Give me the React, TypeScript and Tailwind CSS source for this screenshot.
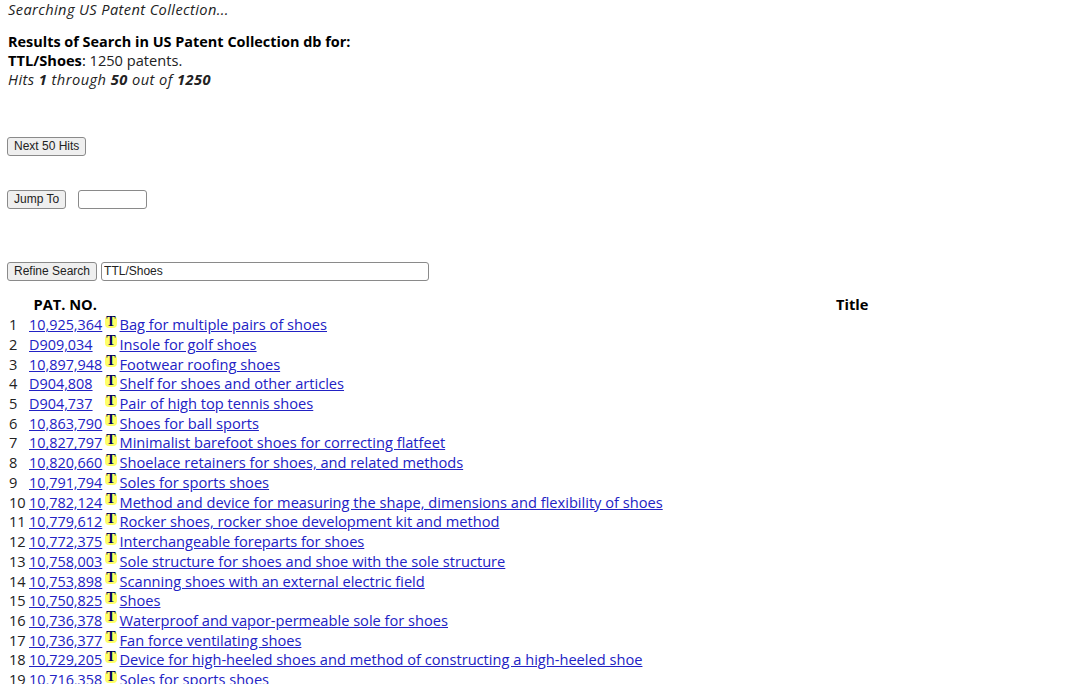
const rows: [string, string][] = [
  ['10,925,364', 'Bag for multiple pairs of shoes'],
  ['D909,034', 'Insole for golf shoes'],
  ['10,897,948', 'Footwear roofing shoes'],
  ['D904,808', 'Shelf for shoes and other articles'],
  ['D904,737', 'Pair of high top tennis shoes'],
  ['10,863,790', 'Shoes for ball sports'],
  ['10,827,797', 'Minimalist barefoot shoes for correcting flatfeet'],
  ['10,820,660', 'Shoelace retainers for shoes, and related methods'],
  ['10,791,794', 'Soles for sports shoes'],
  ['10,782,124', 'Method and device for measuring the shape, dimensions and flexibility of shoes'],
  ['10,779,612', 'Rocker shoes, rocker shoe development kit and method'],
  ['10,772,375', 'Interchangeable foreparts for shoes'],
  ['10,758,003', 'Sole structure for shoes and shoe with the sole structure'],
  ['10,753,898', 'Scanning shoes with an external electric field'],
  ['10,750,825', 'Shoes'],
  ['10,736,378', 'Waterproof and vapor-permeable sole for shoes'],
  ['10,736,377', 'Fan force ventilating shoes'],
  ['10,729,205', 'Device for high-heeled shoes and method of constructing a high-heeled shoe'],
  ['10,716,358', 'Soles for sports shoes'],
];

const buttonClass =
  "h-[19px] rounded-[3px] border border-[#8a8a8a] bg-[#efefef] px-[6px] font-['Liberation_Sans',sans-serif] text-[12px] leading-none text-[#222]";

function Row({ n, pat, title }: { n: number; pat: string; title: string }) {
  return (
    <div className="flex h-[19.72px] items-center">
      <span className="w-[21px] pl-[1px] text-[#222]">{n}</span>
      <a className="w-[76px] text-[14.4px] text-[#2222c4] underline">{pat}</a>
      <span className="relative top-[-3px] flex h-[12px] w-[12px] items-center justify-center rounded-[4px] bg-[#ffff66] font-['Liberation_Serif',serif] text-[14px] leading-none font-bold text-[#000060]">
        T
      </span>
      <a className="ml-[2.5px] text-[#2222c4] underline">{title}</a>
    </div>
  );
}

export default function App() {
  return (
    <div className="h-[684px] overflow-hidden bg-white pl-[8px] font-['Open_Sans','Noto_Sans',sans-serif] text-[14.63px] leading-[19px] text-black">
      <p className="tracking-[0.38px] italic text-[#222]">Searching US Patent Collection...</p>

      <div className="mt-[13px]">
        <p className="text-[14.45px] font-bold">Results of Search in US Patent Collection db for:</p>
        <p>
          <b>TTL/Shoes</b>: <span className="text-[#222]">1250 patents.</span>
        </p>
        <p className="tracking-[0.45px] italic text-[#222]">
          Hits <b>1</b> through <b>50</b> out of <b>1250</b>
        </p>
      </div>

      <div className="mt-[46px] -ml-[1px]">
        <button className={buttonClass}>Next 50 Hits</button>
      </div>

      <div className="mt-[34px] -ml-[1px] flex items-center gap-[12px]">
        <button className={buttonClass}>Jump To</button>
        <input className="h-[19px] w-[69px] rounded-[3px] border border-[#8a8a8a] bg-white" />
      </div>

      <div className="mt-[53px] -ml-[1px] flex items-center gap-[4px]">
        <button className={buttonClass}>Refine Search</button>
        <input
          className="h-[19px] w-[328px] rounded-[3px] border border-[#8a8a8a] bg-white px-[2px] font-['Liberation_Sans',sans-serif] text-[12px] text-[#222]"
          defaultValue="TTL/Shoes"
        />
      </div>

      <div className="mt-[14px] flex h-[20.3px] items-center font-bold">
        <span className="ml-[25.5px] w-[802.5px]">PAT. NO.</span>
        <span>Title</span>
      </div>

      <div>
        {rows.map(([pat, title], i) => (
          <Row key={pat + i} n={i + 1} pat={pat} title={title} />
        ))}
      </div>
    </div>
  );
}
